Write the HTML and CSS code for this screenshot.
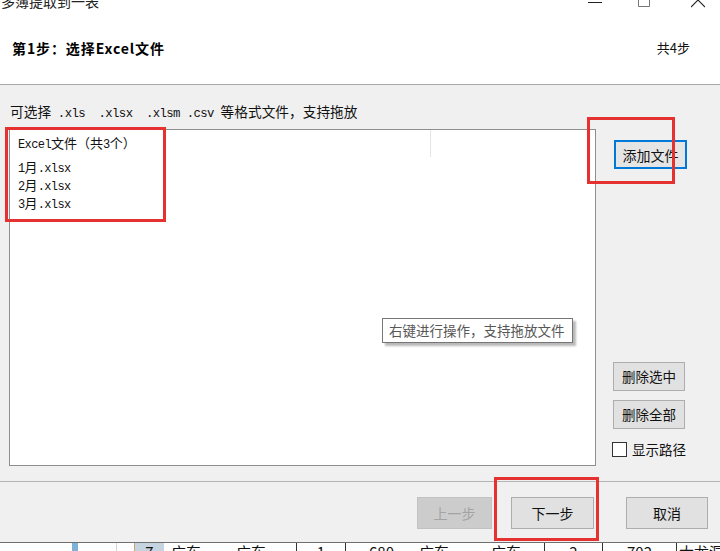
FILE: index.html
```html
<!DOCTYPE html>
<html lang="zh-CN">
<head>
<meta charset="utf-8">
<title>多簿提取到一表</title>
<link rel="stylesheet" href="styles.css">
</head>
<body>
<div class="window">
  <div class="titlebar">
    <span class="title">多簿提取到一表</span>
    <div class="caption">
      <svg class="cap-min" width="14" height="6" viewBox="0 0 14 6"><path d="M0 2.5H14" stroke="#222" stroke-width="1"/></svg>
      <svg class="cap-max" width="12" height="7" viewBox="0 0 12 7"><path d="M0.5 0V6.5H11.5V0" fill="none" stroke="#777" stroke-width="1"/></svg>
      <svg class="cap-close" width="14" height="8" viewBox="0 0 14 8"><path d="M0 -7L14 7M14 -7L0 7" stroke="#222" stroke-width="1.1"/></svg>
    </div>
  </div>
  <div class="header">
    <div class="step">第1步：选择Excel文件</div>
    <div class="total">共4步</div>
  </div>
  <div class="content">
    <div class="hint">可选择<span class="mono"> .xls  .xlsx  .xlsm .csv </span>等格式文件，支持拖放</div>
    <div class="main">
      <div class="listbox">
        <div class="lv-header"><div class="lv-col"><span class="m">Excel</span>文件（共<span class="m">3</span>个）</div></div>
        <div class="lv-row"><span class="m">1</span>月<span class="m">.xlsx</span></div>
        <div class="lv-row"><span class="m">2</span>月<span class="m">.xlsx</span></div>
        <div class="lv-row"><span class="m">3</span>月<span class="m">.xlsx</span></div>
      </div>
      <div class="side">
        <button class="btn btn-add">添加文件</button>
        <div class="side-bottom">
          <button class="btn btn-side">删除选中</button>
          <button class="btn btn-side">删除全部</button>
          <label class="check"><span class="box"></span><span>显示路径</span></label>
        </div>
      </div>
    </div>
  </div>
  <div class="footer">
    <button class="btn btn-foot btn-prev">上一步</button>
    <button class="btn btn-foot btn-next">下一步</button>
    <button class="btn btn-foot btn-cancel">取消</button>
  </div>
  <div class="tooltip">右键进行操作，支持拖放文件</div>
  <div class="mark mark-list"></div>
  <div class="mark mark-add"></div>
  <div class="mark mark-next"></div>
</div>
<div class="sheet">
  <div class="c"></div>
  <div class="c c-blue"></div>
  <div class="c"></div>
  <div class="c c-lg"></div>
  <div class="c c-sel">7</div>
  <div class="c c-l1">广东</div>
  <div class="c c-l2">广东</div>
  <div class="c c-b c-ctr">1</div>
  <div class="c c-b c-ctr c-680">680</div>
  <div class="c c-l3">广东</div>
  <div class="c c-l4">广东</div>
  <div class="c c-b c-ctr">2</div>
  <div class="c c-b c-ctr">702</div>
  <div class="c c-b c-l5">大龙洞</div>
</div>
</body>
</html>
```

FILE: styles.css
```css
html, body {
  margin: 0;
  padding: 0;
  width: 720px;
  height: 551px;
  overflow: hidden;
  background: #ffffff;
  font-family: "Noto Sans CJK SC", "Noto Sans", sans-serif;
  color: #000;
}

.window {
  position: relative;
  width: 720px;
  height: 543px;
  box-sizing: border-box;
  border-bottom: 1px solid #6f6f6f;
  display: flex;
  flex-direction: column;
  background: #f0f0f0;
}

/* title bar (cut off at top) */
.titlebar {
  height: 12px;
  flex: none;
  background: #fff;
  overflow: hidden;
  display: flex;
  align-items: flex-start;
}
.title {
  font-size: 14px;
  line-height: 14px;
  margin-top: -6px;
  padding-left: 1px;
  color: #222;
  white-space: nowrap;
}
.caption {
  margin-left: auto;
  display: flex;
  align-items: flex-start;
  padding-right: 15px;
}
.caption svg { display: block; }
.cap-min { margin-right: 36px; }
.cap-max { margin-right: 41px; }

/* header */
.header {
  height: 72px;
  flex: none;
  background: #fff;
  border-bottom: 1px solid #a7a7a7;
  display: flex;
  align-items: center;
  justify-content: space-between;
  padding: 0 30px 0 12px;
}
.step {
  font-size: 14px;
  font-weight: bold;
  letter-spacing: 0.9px;
  line-height: 20px;
}
.total {
  font-size: 13px;
  line-height: 20px;
  color: #111;
}

/* content */
.content {
  height: 396px;
  flex: none;
  box-sizing: border-box;
  padding: 17px 0 0 9px;
  display: flex;
  flex-direction: column;
}
.hint {
  height: 18px;
  flex: none;
  font-size: 13.7px;
  line-height: 18px;
  padding-left: 1px;
  color: #111;
  white-space: pre;
}
.mono {
  font-family: "Liberation Mono", monospace;
  font-size: 12.3px;
  letter-spacing: -0.6px;
  line-height: 1;
}
.main {
  margin-top: 9px;
  display: flex;
}
.listbox {
  width: 587px;
  height: 337px;
  box-sizing: border-box;
  border: 1px solid #8e8e8e;
  background: #fff;
  font-size: 13px;
  color: #111;
}
.m {
  font-family: "Liberation Mono", monospace;
  font-size: 12px;
  letter-spacing: -0.6px;
  line-height: 1;
}
.lv-header {
  height: 28px;
  display: flex;
}
.lv-col {
  width: 421px;
  border-right: 1px solid #e5e5e5;
  height: 27px;
  line-height: 26px;
  padding-left: 8px;
  box-sizing: border-box;
  white-space: nowrap;
}
.lv-row {
  height: 18px;
  line-height: 18px;
  padding-left: 8px;
  white-space: nowrap;
}

.side {
  margin-left: 17px;
  width: 74px;
  height: 337px;
  display: flex;
  flex-direction: column;
  align-items: flex-start;
}
.btn {
  font-family: "Noto Sans CJK SC", sans-serif;
  font-size: 14px;
  color: #111;
  background: #e1e1e1;
  border: 1px solid #adadad;
  padding: 0;
  margin: 0;
  box-sizing: border-box;
  line-height: 1;
}
.btn-add {
  margin-top: 11px;
  margin-left: 1px;
  width: 73px;
  height: 29px;
  border: 2px solid #0078d7;
  background: #e5e5e5;
}
.side-bottom {
  margin-top: auto;
  padding-bottom: 9px;
  display: flex;
  flex-direction: column;
  align-items: flex-start;
}
.btn-side {
  width: 72px;
  height: 29px;
  font-size: 13.5px;
  margin-bottom: 9px;
}
.btn-side + .btn-side { margin-bottom: 13px; }
.check {
  display: flex;
  align-items: center;
  height: 15px;
  font-size: 13.5px;
  line-height: 15px;
  color: #111;
}
.box {
  width: 15px;
  height: 15px;
  box-sizing: border-box;
  border: 1px solid #333;
  background: #fff;
  margin-left: -1px;
  margin-right: 5px;
}

/* footer */
.footer {
  flex: 1;
  border-top: 1px solid #b4b4b4;
  display: flex;
  justify-content: flex-end;
  align-items: flex-start;
  padding: 15px 12px 0 0;
}
.btn-foot {
  height: 32px;
}
.btn-prev {
  width: 75px;
  background: #cccccc;
  border-color: #c2c2c2;
  color: #a3a3a3;
}
.btn-next {
  width: 83px;
  margin-left: 19px;
}
.btn-cancel {
  width: 82px;
  margin-left: 32px;
}

/* tooltip overlay */
.tooltip {
  position: absolute;
  left: 382px;
  top: 318px;
  width: 191px;
  height: 25px;
  box-sizing: border-box;
  border: 1px solid #767676;
  background: #fff;
  box-shadow: 3px 3px 2px rgba(0, 0, 0, 0.28);
  font-size: 13.5px;
  line-height: 22px;
  padding-left: 6px;
  color: #575757;
  white-space: nowrap;
}

/* red annotation boxes */
.mark {
  position: absolute;
  border: 3px solid #e5312f;
  box-sizing: border-box;
}
.mark-list { left: 5px; top: 127px; width: 161px; height: 95px; }
.mark-add { left: 587px; top: 117px; width: 88px; height: 67px; }
.mark-next { left: 494px; top: 477px; width: 105px; height: 64px; }

/* spreadsheet strip behind dialog */
.sheet {
  height: 8px;
  overflow: hidden;
  display: grid;
  grid-template-columns: 72px 6px 38px 18px 30px 66px 66px 49px 62px 69px 68px 58px 74px 44px;
  background: #fff;
  font-size: 15px;
  line-height: 18px;
  color: #111;
}
.c {
  height: 18px;
  white-space: nowrap;
  box-sizing: border-box;
}
.c-blue { background: #7fb3d6; }
.c-lg { border-left: 1px solid #d4d4d4; }
.c-sel {
  background: #c6d4e2;
  border-left: 1px solid #c9a66b;
  text-align: center;
}
.c-b { border-left: 1px solid #333; }
.c-ctr { text-align: center; }
.c-680 { padding-left: 10px; }
.c-l1 { padding-left: 7px; }
.c-l2 { padding-left: 6px; }
.c-l3 { padding-left: 12px; }
.c-l4 { padding-left: 15px; }
.c-l5 { padding-left: 2px; }
```
